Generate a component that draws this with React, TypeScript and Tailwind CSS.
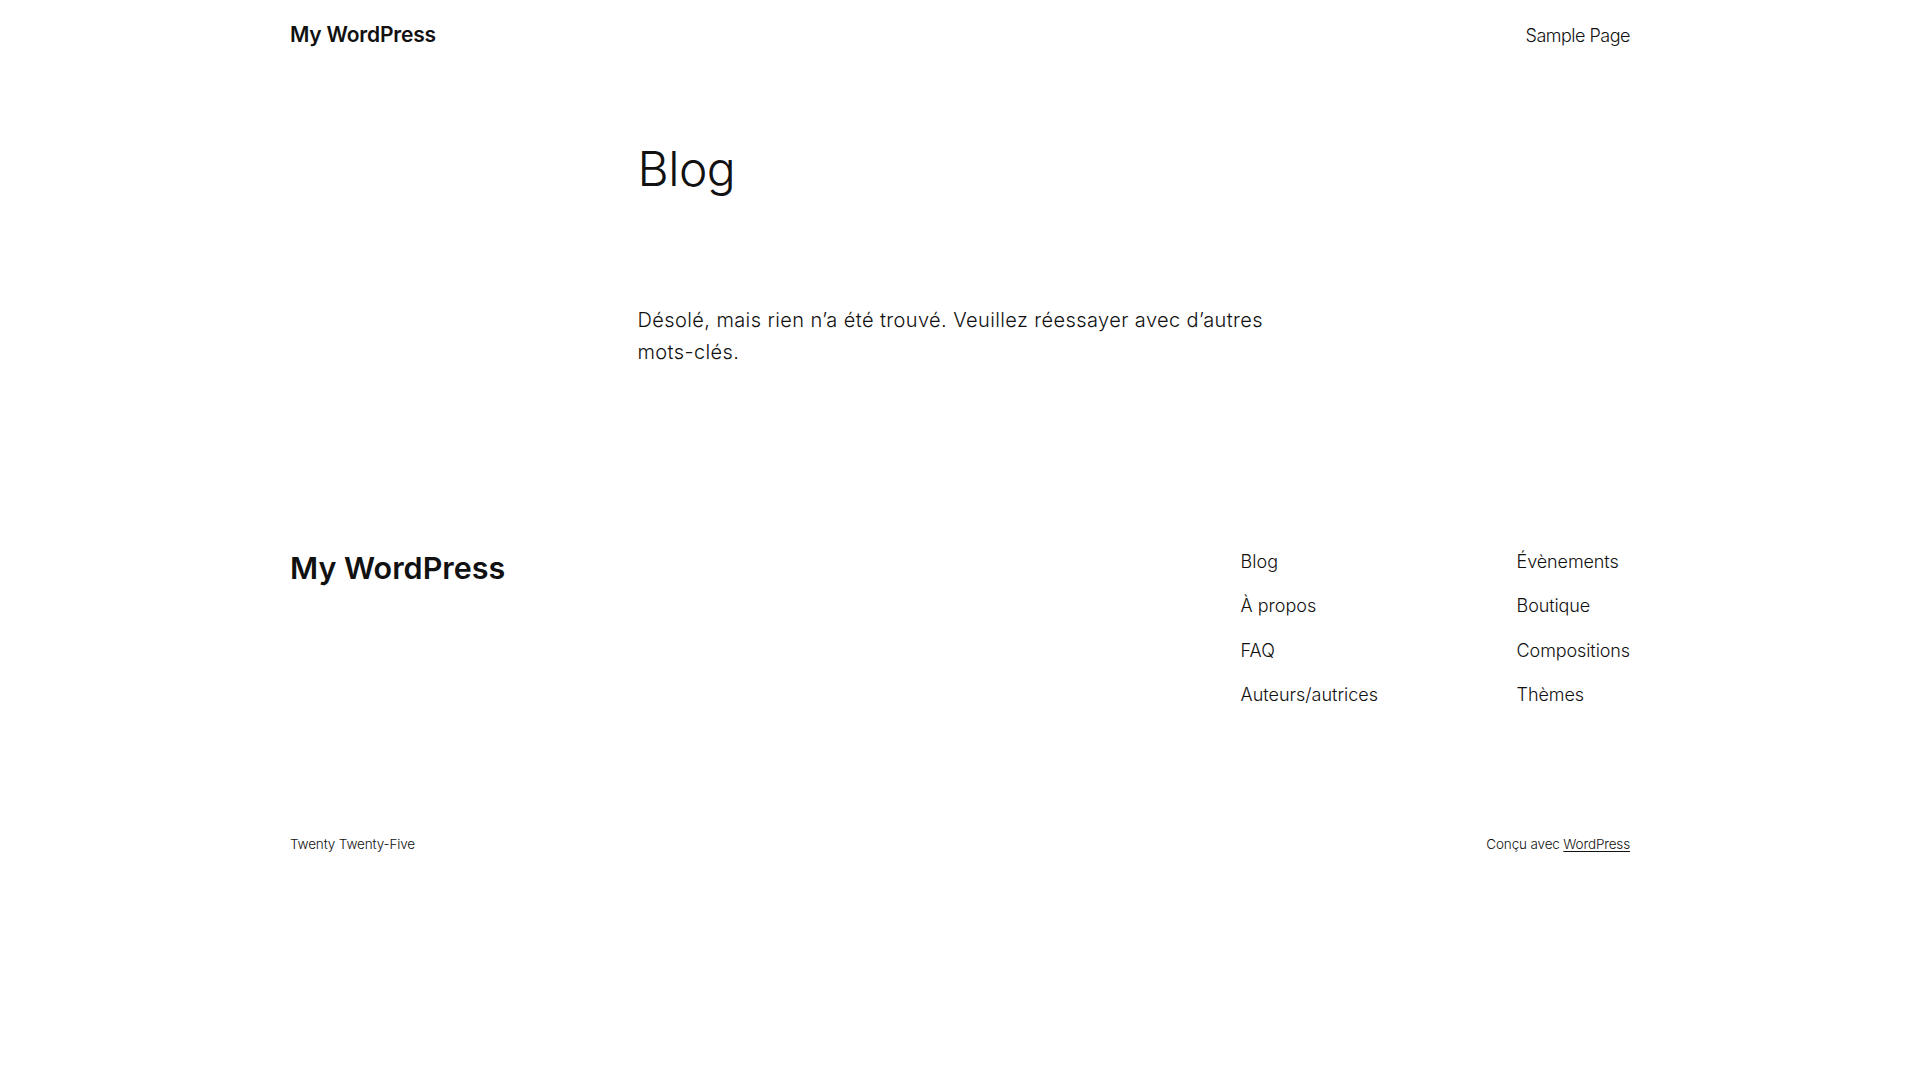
export default function App() {
  const col1 = ["Blog", "À propos", "FAQ", "Auteurs/autrices"]
  const col2 = ["Évènements", "Boutique", "Compositions", "Thèmes"]

  return (
    <div className="min-h-screen bg-white text-[#111111] font-['Inter','Noto_Sans',sans-serif]">
      <header className="mx-auto w-[1340px] h-[70px] flex items-center justify-between">
        <a className="text-[21px] font-semibold tracking-[-0.2px]">My WordPress</a>
        <nav>
          <a className="text-[18px] font-light tracking-[-0.5px]">Sample Page</a>
        </nav>
      </header>

      <main className="mx-auto w-[645px]">
        <h1 className="mt-[70px] text-[48px] leading-[1.2] font-light tracking-[-0.5px]">Blog</h1>
        <p className="mt-[106px] text-[20px] leading-[32px] font-light tracking-[0.4px]">
          Désolé, mais rien n’a été trouvé. Veuillez réessayer avec d’autres mots-clés.
        </p>
      </main>

      <footer className="mx-auto w-[1340px] mt-[180px]">
        <div className="flex items-start justify-between">
          <h2 className="mt-[2px] text-[30.5px] leading-[1.2] font-semibold">My WordPress</h2>
          <div className="flex">
            <ul className="w-[276px] flex flex-col gap-[17.5px]">
              {col1.map((item) => (
                <li key={item} className="text-[18px] leading-[27px] font-light">
                  {item}
                </li>
              ))}
            </ul>
            <ul className="flex flex-col gap-[17.5px]">
              {col2.map((item) => (
                <li key={item} className="text-[18px] leading-[27px] font-light tracking-[-0.1px]">
                  {item}
                </li>
              ))}
            </ul>
          </div>
        </div>
        <div className="mt-[126px] flex items-center justify-between text-[13.5px] leading-[21px] font-light tracking-[-0.15px]">
          <p>Twenty Twenty-Five</p>
          <p>
            Conçu avec <a className="underline underline-offset-2">WordPress</a>
          </p>
        </div>
      </footer>
    </div>
  )
}
